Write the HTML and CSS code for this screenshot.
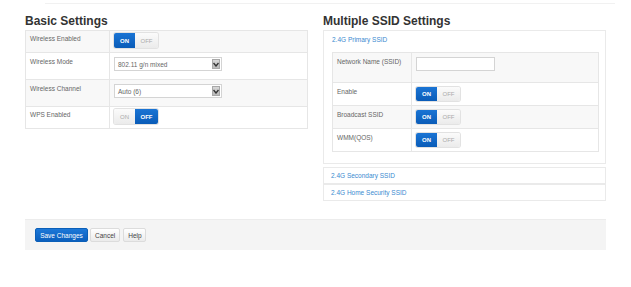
FILE: index.html
```html
<!DOCTYPE html>
<html lang="en">
<head>
  <meta charset="UTF-8">
  <title>Wireless Settings</title>
  <link rel="stylesheet" href="styles.css">
</head>
<body>
  <div class="page">
    <div class="topline"></div>

    <div class="columns">
      <!-- Basic settings -->
      <div class="col">
        <h2>Basic Settings</h2>
        <div class="grid">
          <div class="row odd">
            <div class="label">Wireless Enabled</div>
            <div class="value">
              <div class="toggle"><span class="seg on active">ON</span><span class="seg off">OFF</span></div>
            </div>
          </div>
          <div class="row tall">
            <div class="label">Wireless Mode</div>
            <div class="value">
              <div class="select"><span>802.11 g/n mixed</span><i class="arrow"><svg width="6" height="5" viewBox="0 0 6 5"><path d="M0.5 1 L3 4 L5.5 1" fill="none" stroke="#333" stroke-width="1.4"/></svg></i></div>
            </div>
          </div>
          <div class="row tall odd">
            <div class="label">Wireless Channel</div>
            <div class="value">
              <div class="select"><span>Auto (6)</span><i class="arrow"><svg width="6" height="5" viewBox="0 0 6 5"><path d="M0.5 1 L3 4 L5.5 1" fill="none" stroke="#333" stroke-width="1.4"/></svg></i></div>
            </div>
          </div>
          <div class="row">
            <div class="label">WPS Enabled</div>
            <div class="value">
              <div class="toggle"><span class="seg on">ON</span><span class="seg off active">OFF</span></div>
            </div>
          </div>
        </div>
      </div>

      <!-- Multiple SSID -->
      <div class="col">
        <h2>Multiple SSID Settings</h2>
        <div class="panel main">
          <div class="panel-head">2.4G Primary SSID</div>
          <div class="grid inner">
            <div class="row first odd">
              <div class="label">Network Name (SSID)</div>
              <div class="value"><input class="text" type="text"></div>
            </div>
            <div class="row">
              <div class="label">Enable</div>
              <div class="value">
                <div class="toggle small"><span class="seg on active">ON</span><span class="seg off">OFF</span></div>
              </div>
            </div>
            <div class="row odd">
              <div class="label">Broadcast SSID</div>
              <div class="value">
                <div class="toggle small"><span class="seg on active">ON</span><span class="seg off">OFF</span></div>
              </div>
            </div>
            <div class="row">
              <div class="label">WMM(QOS)</div>
              <div class="value">
                <div class="toggle small"><span class="seg on active">ON</span><span class="seg off">OFF</span></div>
              </div>
            </div>
          </div>
        </div>
        <div class="panel closed first-closed"><div class="panel-head">2.4G Secondary SSID</div></div>
        <div class="panel closed"><div class="panel-head">2.4G Home Security SSID</div></div>
      </div>
    </div>

    <div class="footer">
      <button class="btn primary">Save Changes</button>
      <button class="btn">Cancel</button>
      <button class="btn help">Help</button>
    </div>
  </div>
</body>
</html>
```

FILE: styles.css
```css
body {
  margin: 0;
  background: #fff;
  font-family: "Liberation Sans", Arial, sans-serif;
  color: #555;
}
.page {
  width: 581px;
  padding: 0 25px;
}
.topline {
  margin: 3px 0 0 20px;
  width: 570px;
  height: 1px;
  background: #f1f1f1;
}
.columns {
  display: grid;
  grid-template-columns: 283px 283px;
  column-gap: 15px;
}
h2 {
  margin: 10px 0 2px;
  font-size: 12px;
  line-height: 14px;
  font-weight: bold;
  color: #333;
}
.grid {
  border: 1px solid #e6e6e6;
  border-bottom: none;
}
.row {
  display: grid;
  grid-template-columns: 84px 1fr;
  border-bottom: 1px solid #e6e6e6;
  height: 22px;
  box-sizing: border-box;
}
.row.tall {
  height: 27px;
}
.row.odd {
  background: #f8f8f8;
}
.label {
  border-right: 1px solid #e6e6e6;
  padding: 4px 0 0 4px;
  font-size: 6.5px;
  line-height: 8px;
  color: #666;
}
.row.tall .label {
  padding-top: 5px;
}
.value {
  padding: 2px 0 0 4px;
}
.row.tall .value {
  padding-top: 4px;
}
.toggle {
  display: flex;
  width: max-content;
  height: 15px;
  border-radius: 2px;
  overflow: hidden;
  box-shadow: 0 0 0 1px #e2e2e2;
}
.toggle.small {
  height: 14px;
}
.seg {
  display: flex;
  align-items: center;
  justify-content: center;
  font-size: 6px;
  color: #aaa;
  background: linear-gradient(#fbfbfb, #ebebeb);
}
.seg.on {
  width: 21px;
}
.seg.off {
  width: 23px;
}
.seg.active {
  background: linear-gradient(#1a74d4, #0a5cb8);
  color: #fff;
  font-weight: bold;
}
.select {
  display: flex;
  align-items: center;
  justify-content: space-between;
  width: 108px;
  height: 14px;
  box-sizing: border-box;
  border: 1px solid #d4d4d4;
  background: #fff;
  padding: 0 1px 0 3px;
  font-size: 6.5px;
  color: #666;
}
.arrow {
  display: flex;
  align-items: center;
  justify-content: center;
  width: 8px;
  height: 10px;
  background: linear-gradient(#d8d8d8, #b9b9b9);
  border: 1px solid #a8a8a8;
  box-sizing: border-box;
}
.panel {
  border: 1px solid #eaeaea;
  background: #fff;
}
.panel.main {
  margin-top: 1px;
  padding: 0 6px 11px 8px;
}
.panel-head {
  height: 15px;
  display: flex;
  align-items: center;
  font-size: 6.5px;
  color: #3b8ad0;
}
.panel.main .panel-head {
  height: 16px;
}
.panel.closed .panel-head {
  padding-left: 7px;
}
.panel.first-closed {
  margin-top: 3px;
}
.panel.closed + .panel.closed {
  margin-top: 0;
}
.grid.inner {
  margin-top: 5px;
}
.grid.inner .row {
  grid-template-columns: 79px 1fr;
  height: 23px;
}
.grid.inner .row.first {
  height: 30px;
}
.grid.inner .label {
  padding-top: 5px;
}
.grid.inner .value {
  padding: 4px 0 0 4px;
}
.text {
  display: block;
  width: 79px;
  height: 14px;
  box-sizing: border-box;
  border: 1px solid #d4d4d4;
  margin: 0;
  padding: 0;
}
.footer {
  margin-top: 18px;
  height: 31px;
  box-sizing: border-box;
  background: #f4f4f4;
  border-top: 1px solid #ececec;
  padding: 8px 0 0 10px;
  display: flex;
  align-items: flex-start;
  gap: 2px;
}
.btn {
  height: 14px;
  padding: 0 4px;
  font-family: "Liberation Sans", Arial, sans-serif;
  font-size: 6.5px;
  color: #444;
  border: 1px solid #dcdcdc;
  border-radius: 2px;
  background: linear-gradient(#ffffff, #ebebeb);
  cursor: pointer;
}
.btn.primary {
  width: 53px;
  color: #fff;
  border-color: #0b5fb8;
  background: linear-gradient(#1d78d8, #0b5fbd);
}
.btn.help {
  margin-left: 1px;
  width: 23px;
}
```
